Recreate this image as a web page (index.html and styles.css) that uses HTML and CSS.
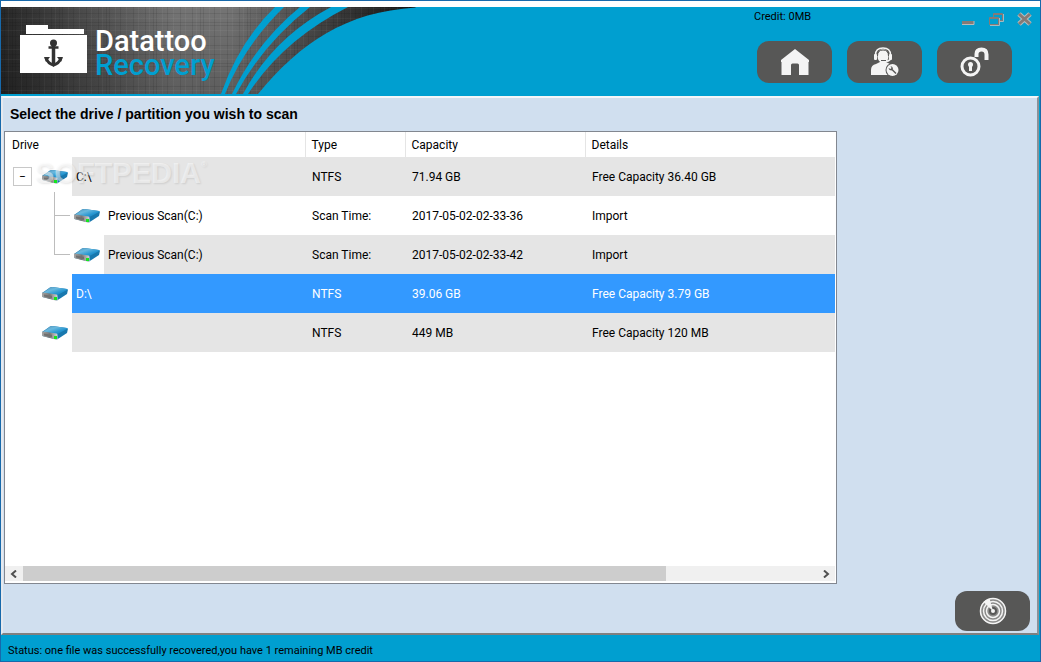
FILE: index.html
```html
<!DOCTYPE html>
<html lang="en">
<head>
<meta charset="utf-8">
<title>Datattoo Recovery</title>
<link rel="stylesheet" href="styles.css">
</head>
<body>
<svg class="defs" width="0" height="0" aria-hidden="true">
  <defs>
    <linearGradient id="diskTop" x1="0" y1="0" x2="1" y2="1">
      <stop offset="0" stop-color="#4c8cb4"/><stop offset=".35" stop-color="#69b8de"/><stop offset=".65" stop-color="#2595d0"/><stop offset="1" stop-color="#1779b4"/>
    </linearGradient>
    <linearGradient id="diskFront" x1="0" y1="0" x2="1" y2="0">
      <stop offset="0" stop-color="#a4a4a4"/><stop offset=".5" stop-color="#777"/><stop offset="1" stop-color="#d8d8d8"/>
    </linearGradient>
    <symbol id="disk" viewBox="0 0 28 16">
      <path d="M1 7 L9 1.500 Q10 1 11.500 1 L26 3 Q27 3.300 26.800 4.500 L26 8 L16 14.500 L1.500 11 Z" fill="#1878ae"/>
      <path d="M2 7 L9 1.500 Q10 1 11.500 1 L26 3 Q27 3.300 26 4 L15.500 9.500 Z" fill="url(#diskTop)"/>
      <path d="M1 7 Q1 6.500 2 6.600 L15.500 8.500 Q16.500 8.800 16.500 10 V14 Q16 15 14.500 14.500 L2 11.300 Q1 11 1 10 Z" fill="url(#diskFront)"/>
      <path d="M3 8.500 L11 9.800 V12.300 L3 10.500 Z" fill="#707070"/>
      <rect x="13" y="11" width="3" height="3" fill="#14e61e"/>
    </symbol>
  </defs>
</svg>
<div class="window">
  <header class="banner">
    <svg class="banner-art" width="416" height="87" viewBox="0 7 416 87" aria-hidden="true">
      <defs>
        <linearGradient id="steel" x1="0" y1="0" x2="1" y2="0">
          <stop offset="0" stop-color="#272727"/><stop offset=".2" stop-color="#4c4c4c"/><stop offset=".42" stop-color="#747474"/><stop offset=".55" stop-color="#747474"/><stop offset=".72" stop-color="#505050"/><stop offset=".88" stop-color="#2b2b2b"/><stop offset="1" stop-color="#111"/>
        </linearGradient>
        <linearGradient id="shade" x1="0" y1="0" x2="0" y2="1">
          <stop offset="0" stop-color="#000" stop-opacity="0"/><stop offset="1" stop-color="#000" stop-opacity=".2"/>
        </linearGradient>
        <pattern id="weave" width="47" height="41" patternUnits="userSpaceOnUse">
          <path d="M3.500 0V41M11.500 0V41M14.500 0V41M25.500 0V41M38.500 0V41M0 4.500H47M0 13.500H47M0 22.500H47M0 25.500H47M0 36.500H47" stroke="#000" stroke-opacity=".09"/>
          <path d="M7.500 0V41M20.500 0V41M31.500 0V41M43.500 0V41M0 8.500H47M0 18.500H47M0 30.500H47" stroke="#fff" stroke-opacity=".04"/>
        </pattern>
        <path id="plate" d="M0 7H414.500V7.500C345 12 300 42 257 94H0Z"/>
      </defs>
      <use href="#plate" fill="url(#steel)"/>
      <use href="#plate" fill="url(#shade)"/>
      <use href="#plate" fill="url(#weave)"/>
      <g fill="#009fd0">
        <path d="M220 94Q238 42 274 7H283Q243 46 224 94Z"/>
        <path d="M231 94Q256 42 299 7H309Q262 44 235 94Z"/>
        <path d="M242 94Q272 38 330 7H347Q282 40 247 94Z"/>
      </g>
    </svg>
    <div class="brand">
      <svg width="68" height="49" viewBox="0 0 68 49" aria-hidden="true">
        <path d="M6 0H28V4H64V9H6ZM0 10H67V48H0Z" fill="#fff"/>
        <g fill="none" stroke="#333">
          <path d="M33.500 19V38" stroke-width="3.500"/>
          <path d="M28.500 22.500H38.500" stroke-width="2.500"/>
          <path d="M26 33Q28 38.500 33.500 40Q39 38.500 41 33" stroke-width="3"/>
        </g>
        <circle cx="33.500" cy="18" r="3.500" fill="#333"/>
        <path d="M24 32L30 32L26 37ZM43 32L37 32L41 37ZM30 38H37L33.500 42Z" fill="#333"/>
      </svg>
      <div class="brand-name"><span>Datattoo</span><span class="accent">Recovery</span></div>
    </div>
    <div class="tools">
      <div class="tools-top">
        <span class="credit">Credit: 0MB</span>
        <div class="window-controls">
          <button type="button" aria-label="Minimize"><svg width="14" height="14"><path d="M1 9H13V13H1Z" fill="#857a76"/><path d="M1 12.500H13V9" stroke="#b9b9b9" fill="none"/></svg></button>
          <button type="button" aria-label="Restore"><svg width="16" height="14"><path d="M5.500 5V1.500H14.500V8.500H11M5 2.500H15M1.500 5.500H10.500V12.500H1.500ZM1 6.500H11" stroke="#857a76" fill="none"/><path d="M2 13.500H11.500V6M12 9.500H15.500V2" stroke="#a5b9c0" fill="none"/></svg></button>
          <button type="button" aria-label="Close"><svg width="15" height="14"><path d="M2 2L13 12M13 2L2 12" stroke="#b7bcbd" stroke-width="5"/><path d="M2 2L13 12M13 2L2 12" stroke="#857a76" stroke-width="3"/></svg></button>
        </div>
      </div>
      <nav class="tools-nav">
        <button type="button" class="pill" aria-label="Home"><svg width="30" height="28" viewBox="0 0 30 28"><path d="M15 1L1 12V14H1.500V27H11V17Q11 15.500 12.500 15.500H17.500Q19 15.500 19 17V27H28.500V14H29V12Z" fill="#f4f4f4"/></svg></button>
        <button type="button" class="pill" aria-label="Support"><svg width="30" height="30" viewBox="0 0 30 30"><g fill="#f4f4f4"><path d="M1 28V23Q1 18 6 17L10 15H16L20 17Q23 18 23 22L18 28Z"/><ellipse cx="13" cy="9" rx="5.500" ry="7"/><rect x="4" y="7" width="3" height="6" rx="1"/><rect x="19" y="7" width="3" height="6" rx="1"/></g><path d="M5.500 8Q5.500 1 13 1T20.500 8V12Q19 14.500 14 14.500" fill="none" stroke="#f4f4f4" stroke-width="1.500"/><path d="M7.500 9Q7.500 3 13 3T18.500 9" fill="none" stroke="#575756"/><path d="M11 13.500H16" stroke="#575756"/><circle cx="22.500" cy="23" r="7" fill="#575756"/><circle cx="22.500" cy="23" r="6" fill="#f4f4f4"/><path d="M22 22.500L26 26.500" stroke="#575756" stroke-width="1.500"/><path d="M18.500 21Q19 23.500 21.500 23.500L23 22Q23 19.500 20.500 19L21.500 21L20.500 22Z" fill="#575756"/></svg></button>
        <button type="button" class="pill" aria-label="Unlock"><svg width="30" height="30" viewBox="0 0 30 30"><circle cx="10.500" cy="19.500" r="8.500" fill="none" stroke="#f4f4f4" stroke-width="3"/><circle cx="10.500" cy="17.500" r="2.500" fill="#f4f4f4"/><path d="M9 18H12V24H9Z" fill="#f4f4f4"/><path d="M16.500 10V7Q16.500 2.500 21.500 2.500T26.500 7.500V13" fill="none" stroke="#f4f4f4" stroke-width="4"/></svg></button>
      </nav>
    </div>
  </header>

  <main class="panel">
    <h1>Select the drive / partition you wish to scan</h1>
    <section class="list">
      <table>
        <colgroup><col class="c-drive"><col class="c-type"><col class="c-cap"><col></colgroup>
        <thead><tr><th>Drive</th><th>Type</th><th>Capacity</th><th>Details</th></tr></thead>
        <tbody>
          <tr class="shaded"><td><div class="node parent"><span class="gutter"><button type="button" class="toggle" aria-label="Collapse">−</button><svg class="disk"><use href="#disk"/></svg></span><span class="name">C:\</span></div></td><td>NTFS</td><td>71.94 GB</td><td>Free Capacity 36.40 GB</td></tr>
          <tr><td><div class="node child"><span class="gutter"><i class="branch"></i><svg class="disk"><use href="#disk"/></svg></span><span class="name">Previous Scan(C:)</span></div></td><td>Scan Time:</td><td>2017-05-02-02-33-36</td><td>Import</td></tr>
          <tr class="shaded"><td><div class="node child last"><span class="gutter"><i class="branch"></i><svg class="disk"><use href="#disk"/></svg></span><span class="name">Previous Scan(C:)</span></div></td><td>Scan Time:</td><td>2017-05-02-02-33-42</td><td>Import</td></tr>
          <tr class="selected"><td><div class="node"><span class="gutter"><svg class="disk"><use href="#disk"/></svg></span><span class="name">D:\</span></div></td><td>NTFS</td><td>39.06 GB</td><td>Free Capacity 3.79 GB</td></tr>
          <tr class="shaded"><td><div class="node"><span class="gutter"><svg class="disk"><use href="#disk"/></svg></span><span class="name"></span></div></td><td>NTFS</td><td>449 MB</td><td>Free Capacity 120 MB</td></tr>
        </tbody>
      </table>
      <div class="watermark">SOFTPEDIA<sup>®</sup></div>
      <div class="scrollbar">
        <button type="button" aria-label="Scroll left"><svg width="8" height="8"><path d="M6 0.500L2 4L6 7.500" fill="none" stroke="#505050" stroke-width="2"/></svg></button>
        <div class="track"><div class="thumb"></div></div>
        <button type="button" aria-label="Scroll right"><svg width="8" height="8"><path d="M2 0.500L6 4L2 7.500" fill="none" stroke="#505050" stroke-width="2"/></svg></button>
      </div>
    </section>
    <div class="actions">
      <button type="button" class="pill" aria-label="Scan"><svg width="28" height="28" viewBox="0 0 28 28"><circle cx="14" cy="14" r="13" fill="#8a8a89"/><g fill="none" stroke="#f4f4f4" stroke-width="1.500"><circle cx="14" cy="14" r="12.500"/><circle cx="14" cy="14" r="9.500"/><circle cx="14" cy="14" r="6.500"/></g><circle cx="14" cy="14" r="4" fill="#575756"/><path d="M14 14L4.500 5Q7 2.500 10.500 1.500Z" fill="#f4f4f4"/><circle cx="14" cy="14" r="2" fill="#f4f4f4"/></svg></button>
    </div>
  </main>
  <footer class="status">Status: one file was successfully recovered,you have 1 remaining MB credit</footer>
</div>
</body>
</html>
```
FILE: styles.css
```css
* { box-sizing: border-box; }
body { margin: 0; color: #000; font: 12px/16px Roboto, "Open Sans", sans-serif; }
button { display: flex; align-items: center; justify-content: center; padding: 0; border: 0; background: none; color: inherit; font: inherit; }
svg { display: block; }
.defs { position: absolute; }

.window { display: flex; flex-direction: column; min-height: 100vh; border: 1px solid #1769ab; padding-top: 6px; background: linear-gradient(#fff 6px, #009fd0 6px); }

.banner { position: relative; display: flex; justify-content: space-between; height: 89px; background: #009fd0; }
.banner-art { position: absolute; top: 0; left: 0; }
.brand { position: relative; display: flex; align-items: flex-start; gap: 7px; padding: 18px 0 0 19px; }
.brand-name { display: flex; flex-direction: column; padding-top: 4px; color: #fff; font: 500 29px/24px Roboto, sans-serif; }
.accent { color: #009fd0; }

.tools { display: flex; flex-direction: column; gap: 14px; width: 286px; padding-top: 2px; }
.tools-top { display: flex; justify-content: space-between; height: 18px; padding-right: 8px; }
.credit, .status { font-size: 11px; }
.window-controls { display: flex; gap: 13px; padding-top: 2px; }
.tools-nav { display: flex; gap: 15px; padding-left: 3px; }
.pill { width: 75px; height: 42px; border-radius: 12px; background: #575756; }

.panel { flex: 1; display: flex; flex-direction: column; margin-right: 1px; padding: 7px 7px 2px 1px; border: 2px solid #f4f6f8; border-right: 2px solid #8b9299; border-bottom: 2px solid #808080; border-left: 2px solid #e6e9ee; background: #d0dfef; }
h1 { margin: 0 0 8px 6px; font: bold 14px/18px "Liberation Sans", Arial, sans-serif; }

.list { position: relative; flex: 1; display: flex; flex-direction: column; justify-content: space-between; margin-right: 193px; padding: 0 1px 2px 0; border: 1px solid #828790; background: #fff; }
table { width: 100%; border-collapse: collapse; table-layout: fixed; }
.c-drive { width: 300px; }
.c-type { width: 100px; }
.c-cap { width: 180px; }
th { height: 25px; padding: 0 6px; border-right: 1px solid #e5e5e5; font-weight: normal; text-align: left; }
th:first-child { padding-left: 7px; }
th:last-child { border-right: 0; }
td { height: 39px; padding: 0 7px; }
td:first-child { padding: 0; }
.shaded td:not(:first-child), .shaded .name { background: #e5e5e5; }
.selected td:not(:first-child), .selected .name { background: #3399ff; color: #fff; }
.node { display: flex; height: 39px; }
.gutter { position: relative; display: flex; align-items: center; justify-content: flex-end; width: 67px; padding-right: 3px; }
.child .gutter { width: 99px; }
.name { flex: 1; display: flex; align-items: center; padding-left: 4px; }
.disk { width: 28px; height: 16px; }
.toggle { width: 19px; height: 19px; margin-right: 9px; border: 1px solid #c8c8c8; }
.parent .gutter::after { content: ""; position: absolute; left: 49px; bottom: 0; height: 4px; border-left: 1px solid #bdbdbd; }
.branch { position: relative; align-self: stretch; width: 16px; margin-right: 3px; border-left: 1px solid #bdbdbd; }
.branch::after { content: ""; position: absolute; top: 19px; left: 0; width: 15px; border-top: 1px solid #bdbdbd; }
.last .branch { height: 20px; align-self: flex-start; }

.watermark { position: absolute; top: 25px; left: 30px; color: rgba(255, 255, 255, .5); font: bold 29px/32px "Liberation Sans", Arial, sans-serif; text-shadow: 1px 1px 2px rgba(0, 0, 0, .1); pointer-events: none; }
.watermark sup { font-size: 8px; line-height: 8px; vertical-align: 16px; }

.scrollbar { display: flex; height: 15px; background: #f0f0f0; }
.scrollbar button { width: 18px; }
.track { flex: 1; display: flex; }
.thumb { width: 81%; background: #cdcdcd; }

.actions { display: flex; justify-content: flex-end; padding-top: 7px; }
.actions .pill { height: 40px; }
.status { height: 26px; padding-left: 7px; line-height: 32px; }
```
